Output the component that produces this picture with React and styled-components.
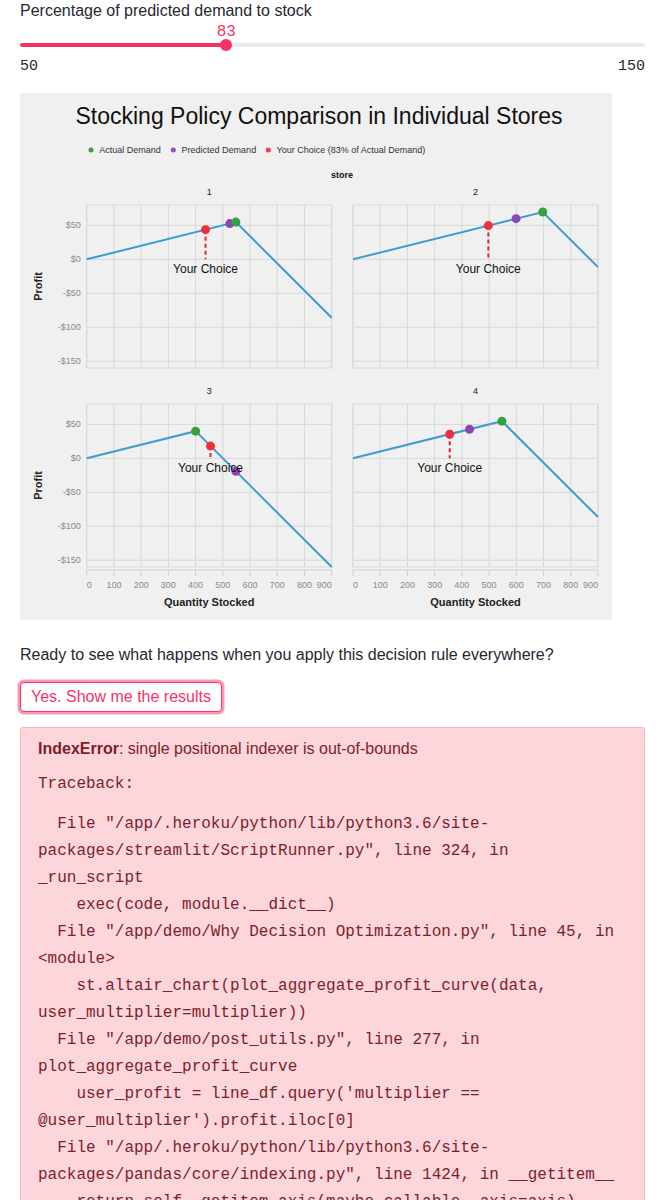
import React from "react";
import styled, { createGlobalStyle } from "styled-components";

const GlobalStyle = createGlobalStyle`
  body {
    margin: 0;
    background: #ffffff;
    font-family: "Liberation Sans", Arial, sans-serif;
    color: #262730;
  }
`;

const PINK = "#f63366";
const CHART_FONT = '"Liberation Sans", Arial, sans-serif';

const Page = styled.div`
  width: 625px;
  padding: 0 20px;
  display: flex;
  flex-direction: column;
`;

const SliderLabel = styled.div`
  font-size: 16px;
  line-height: 20px;
  padding-top: 1px;
`;

const ValueRow = styled.div`
  position: relative;
  height: 16px;
  margin-top: 3px;
`;

const ThumbValue = styled.span`
  position: absolute;
  top: 0;
  transform: translateX(-50%);
  font-family: "Liberation Mono", monospace;
  font-size: 16px;
  line-height: 16px;
  color: ${PINK};
`;

const Track = styled.div`
  position: relative;
  height: 4px;
  margin-top: 3px;
  border-radius: 2px;
  background: #e6e9ef;
`;

const TrackFill = styled.div`
  height: 100%;
  border-radius: 2px;
  background: ${PINK};
`;

const Thumb = styled.div`
  position: absolute;
  top: 50%;
  width: 12px;
  height: 12px;
  border-radius: 50%;
  background: ${PINK};
  transform: translate(-50%, -50%);
`;

const MinMax = styled.div`
  display: flex;
  justify-content: space-between;
  margin-top: 12px;
  font-family: "Liberation Mono", monospace;
  font-size: 15px;
  line-height: 16px;
`;

const ChartFrame = styled.div`
  width: 592px;
  height: 527px;
  margin-top: 18px;
  background: #f0f0f0;
`;

const Question = styled.p`
  margin: 25px 0 0;
  font-size: 16px;
  line-height: 20px;
`;

const ResultButton = styled.button`
  align-self: flex-start;
  margin-top: 17px;
  padding: 4px 10px;
  border: 1px solid ${PINK};
  border-radius: 4px;
  background: #ffffff;
  color: ${PINK};
  font-family: "Liberation Sans", Arial, sans-serif;
  font-size: 16px;
  line-height: 20px;
  box-shadow: 0 0 0 2.5px rgba(246, 51, 102, 0.5);
`;

const ErrorBox = styled.div`
  margin-top: 15px;
  padding: 9px 18px 12px 17px;
  border: 1px solid #f6b8c0;
  border-radius: 3px;
  background: #fcd6da;
  color: #7e1d2b;
`;

const ErrorTitle = styled.div`
  font-size: 16px;
  line-height: 24px;
  b {
    font-weight: 700;
  }
`;

const Mono = styled.div`
  font-family: "Liberation Mono", monospace;
  font-size: 16px;
  line-height: 27px;
  white-space: pre;
  margin-top: ${(p) => p.$gap || 0}px;
`;

const stores = [
  { id: 1, actual: 548, predicted: 526, col: 0, row: 0 },
  { id: 2, actual: 697, predicted: 599, col: 1, row: 0 },
  { id: 3, actual: 400, predicted: 548, col: 0, row: 1 },
  { id: 4, actual: 547, predicted: 428, col: 1, row: 1 },
];

const MULT = 0.83;
const PW = 245;
const PH = 163;
const LEFTS = [66.7, 333];
const TOPS = [112, 311];
const Y_TICKS = [50, 0, -50, -100, -150];
const X_TICKS = [0, 100, 200, 300, 400, 500, 600, 700, 800, 900];

const profit = (q, d) => (q <= d ? 0.1 * q : 0.1 * d - 0.4 * (q - d));

function Panel({ store }) {
  const left = LEFTS[store.col];
  const top = TOPS[store.row];
  const x = (q) => left + (q / 900) * PW;
  const y = (v) => top + ((80 - v) * PH) / 240;
  const choice = store.predicted * MULT;
  const linePts = [0, store.actual, 900]
    .map((q) => `${x(q)},${y(profit(q, store.actual))}`)
    .join(" ");
  const bottom = top + PH;

  return (
    <g>
      <text x={left + PW / 2} y={top - 10} fontSize="9" textAnchor="middle" fill="#222">
        {store.id}
      </text>
      {X_TICKS.map((q) => (
        <line key={"v" + q} x1={x(q)} x2={x(q)} y1={top} y2={bottom} stroke="#d8d8d8" />
      ))}
      {Y_TICKS.map((v) => (
        <line key={"h" + v} x1={left} x2={left + PW} y1={y(v)} y2={y(v)} stroke="#d8d8d8" />
      ))}
      <rect x={left} y={top} width={PW} height={PH} fill="none" stroke="#dadada" />

      {store.col === 0 && (
        <g>
          {Y_TICKS.map((v) => (
            <text
              key={"yl" + v}
              x={left - 6}
              y={y(v) + 3}
              fontSize="9"
              textAnchor="end"
              fill="#8a8a8a"
            >
              {v < 0 ? `-$${-v}` : `$${v}`}
            </text>
          ))}
          <text
            transform={`translate(22 ${top + PH / 2}) rotate(-90)`}
            fontSize="11"
            fontWeight="700"
            textAnchor="middle"
            fill="#222"
          >
            Profit
          </text>
        </g>
      )}

      {store.row === 1 && (
        <g>
          <line x1={left} x2={left + PW} y1={bottom + 3} y2={bottom + 3} stroke="#cfcfcf" />
          {X_TICKS.map((q, i) => (
            <g key={"xt" + q}>
              <line x1={x(q)} x2={x(q)} y1={bottom + 3} y2={bottom + 9} stroke="#cfcfcf" />
              <text
                x={x(q)}
                y={bottom + 21}
                fontSize="9"
                textAnchor={i === 0 ? "start" : i === X_TICKS.length - 1 ? "end" : "middle"}
                fill="#8a8a8a"
              >
                {q}
              </text>
            </g>
          ))}
          <text
            x={left + PW / 2}
            y={bottom + 39}
            fontSize="11"
            fontWeight="700"
            textAnchor="middle"
            fill="#222"
          >
            Quantity Stocked
          </text>
        </g>
      )}

      <polyline points={linePts} fill="none" stroke="#3d9bd4" strokeWidth="2" />
      <line
        x1={x(choice)}
        x2={x(choice)}
        y1={y(profit(choice, store.actual))}
        y2={y(0)}
        stroke="#e3242f"
        strokeWidth="2"
        strokeDasharray="4 3"
      />
      <circle cx={x(choice)} cy={y(profit(choice, store.actual))} r="4.5" fill="#ef2f3c" />
      <circle
        cx={x(store.predicted)}
        cy={y(profit(store.predicted, store.actual))}
        r="4.5"
        fill="#8c45b4"
      />
      <circle cx={x(store.actual)} cy={y(profit(store.actual, store.actual))} r="4.5" fill="#35a03e" />
      <text x={x(choice)} y={y(0) + 14} fontSize="12" textAnchor="middle" fill="#111">
        Your Choice
      </text>
    </g>
  );
}

const legend = [
  { x: 71, color: "#3aa046", label: "Actual Demand" },
  { x: 153.3, color: "#9450b8", label: "Predicted Demand" },
  { x: 248.3, color: "#e8404f", label: "Your Choice (83% of Actual Demand)" },
];

function StoreChart() {
  return (
    <ChartFrame>
      <svg width="592" height="527" fontFamily={CHART_FONT}>
        <text x="299" y="31" fontSize="23" textAnchor="middle" fill="#111">
          Stocking Policy Comparison in Individual Stores
        </text>
        {legend.map((item) => (
          <g key={item.label}>
            <circle cx={item.x} cy="57" r="2.5" fill={item.color} />
            <text x={item.x + 8.3} y="60.2" fontSize="9" fill="#333">
              {item.label}
            </text>
          </g>
        ))}
        <text x="322" y="84.5" fontSize="9" fontWeight="700" textAnchor="middle" fill="#111">
          store
        </text>
        {stores.map((s) => (
          <Panel key={s.id} store={s} />
        ))}
      </svg>
    </ChartFrame>
  );
}

const frames = [
  [
    '  File "/app/.heroku/python/lib/python3.6/site-',
    'packages/streamlit/ScriptRunner.py", line 324, in',
    "_run_script",
    "    exec(code, module.__dict__)",
  ],
  [
    '  File "/app/demo/Why Decision Optimization.py", line 45, in',
    "<module>",
    "    st.altair_chart(plot_aggregate_profit_curve(data,",
    "user_multiplier=multiplier))",
  ],
  [
    '  File "/app/demo/post_utils.py", line 277, in',
    "plot_aggregate_profit_curve",
    "    user_profit = line_df.query('multiplier ==",
    "@user_multiplier').profit.iloc[0]",
  ],
  [
    '  File "/app/.heroku/python/lib/python3.6/site-',
    'packages/pandas/core/indexing.py", line 1424, in __getitem__',
    "    return self._getitem_axis(maybe_callable, axis=axis)",
  ],
];

export default function App() {
  const value = 83;
  const pct = ((value - 50) / 100) * 100;

  return (
    <>
      <GlobalStyle />
      <Page>
        <SliderLabel>Percentage of predicted demand to stock</SliderLabel>
        <ValueRow>
          <ThumbValue style={{ left: `${pct}%` }}>{value}</ThumbValue>
        </ValueRow>
        <Track>
          <TrackFill style={{ width: `${pct}%` }} />
          <Thumb style={{ left: `${pct}%` }} />
        </Track>
        <MinMax>
          <span>50</span>
          <span>150</span>
        </MinMax>

        <StoreChart />

        <Question>Ready to see what happens when you apply this decision rule everywhere?</Question>
        <ResultButton>Yes. Show me the results</ResultButton>

        <ErrorBox>
          <ErrorTitle>
            <b>IndexError</b>: single positional indexer is out-of-bounds
          </ErrorTitle>
          <Mono $gap={10}>Traceback:</Mono>
          <Mono $gap={13}>{frames.map((f) => f.join("\n")).join("\n")}</Mono>
        </ErrorBox>
      </Page>
    </>
  );
}
